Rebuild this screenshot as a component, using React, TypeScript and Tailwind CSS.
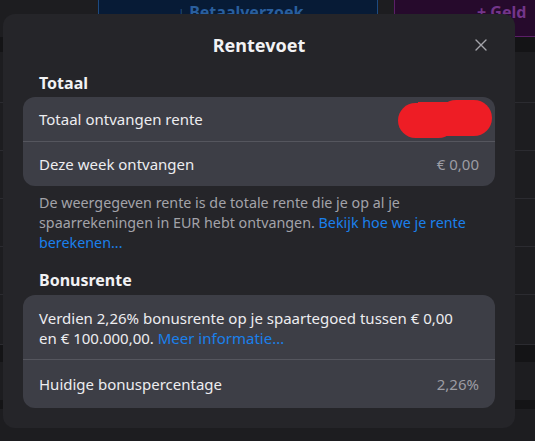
import React from "react";

function Row({ children, className = "" }: { children: React.ReactNode; className?: string }) {
  return <div className={`flex items-center justify-between px-4 ${className}`}>{children}</div>;
}

export default function App() {
  const font = { fontFamily: '"Noto Sans", "Open Sans", sans-serif' };
  return (
    <div className="relative w-[535px] h-[441px] overflow-hidden bg-[#1d1d20]" style={font}>
      {/* background page */}
      <div className="flex flex-col">
        <div className="flex h-[37px] items-end gap-4 pl-[98px]">
          <div className="flex h-[37px] w-[280px] items-start border border-t-0 border-[#1d4a80] bg-[#071b36] pl-[78px] pt-0 text-[16px] font-bold leading-[24px] text-[#2a5f9e]">
            ↓ Betaalverzoek
          </div>
          <div className="flex h-[37px] flex-1 items-start border border-t-0 border-r-0 border-[#5b1f68] bg-[#260a2c] pl-[82px] pt-0 text-[16px] font-bold leading-[24px] text-[#73358a]">
            + Geld
          </div>
        </div>
        <div className="h-[15px] bg-[#141416]" />
        <div className="h-[51px] border-b border-[#2b2b30]" />
        <div className="h-[48px] border-b border-[#2b2b30]" />
        <div className="h-[48px] border-b border-[#2b2b30]" />
        <div className="h-[48px] border-b border-[#2b2b30]" />
        <div className="h-[48px] border-b border-[#2b2b30]" />
        <div className="h-[50px] border-b border-[#2b2b30]" />
        <div className="h-[17px] bg-[#141416]" />
        <div className="h-[38px]" />
        <div className="h-[9px] bg-[#141416]" />
      </div>

      {/* modal */}
      <div className="absolute left-[3px] top-[14px] w-[512px] h-[414px] rounded-[12px] bg-[#252529] px-5 pb-5">
        <div className="relative flex h-[60px] items-center justify-center pt-[2px]">
          <span className="text-[18px] font-bold text-[#f2f2f4]">Rentevoet</span>
          <svg className="absolute right-[8px] top-[25px]" width="12" height="12" viewBox="0 0 12 12">
            <path d="M1 1 L11 11 M11 1 L1 11" stroke="#a4a4aa" strokeWidth="1.4" strokeLinecap="round" />
          </svg>
        </div>
        <div className="pl-4 text-[16px] font-bold leading-[24px] text-[#f2f2f4] -mt-[3px]">Totaal</div>
        <div className="mt-[2px] rounded-[12px] bg-[#3d3e46] text-[15px] text-[#ededf0]">
          <Row className="h-[44px]">
            <span>Totaal ontvangen rente</span>
            <span className="relative h-[38px] w-[94px] -mr-[13px]">
              <span className="absolute left-0 top-[3px] h-[35px] w-[58px] rounded-full bg-[#ee1d25]" />
              <span className="absolute left-[40px] top-0 h-[36px] w-[54px] rounded-full bg-[#ee1d25]" />
              <span className="absolute left-[20px] top-[2px] h-[34px] w-[46px] bg-[#ee1d25]" />
            </span>
          </Row>
          <div className="h-px bg-[#55565e]" />
          <Row className="h-[44px]">
            <span>Deze week ontvangen</span>
            <span className="text-[#9c9ca3]">€ 0,00</span>
          </Row>
        </div>
        <p className="mt-[7px] px-4 text-[14.3px] leading-[20px] text-[#a3a3a9]">
          De weergegeven rente is de totale rente die je op al je spaarrekeningen in EUR hebt ontvangen.{" "}
          <span className="text-[#1a80ec]">Bekijk hoe we je rente berekenen...</span>
        </p>
        <div className="mt-[15px] pl-4 text-[16px] font-bold leading-[24px] text-[#f2f2f4]">Bonusrente</div>
        <div className="mt-[3px] rounded-[12px] bg-[#3d3e46] text-[15px] text-[#ededf0]">
          <div className="px-4 pt-[13px] pb-[11px] leading-[20px]">
            Verdien 2,26% bonusrente op je spaartegoed tussen €{"\u00a0"}0,00 en{"\u00a0"}€{"\u00a0"}100.000,00.{" "}
            <span className="text-[#1a80ec]">Meer informatie...</span>
          </div>
          <div className="h-px bg-[#55565e]" />
          <Row className="h-[48px]">
            <span>Huidige bonuspercentage</span>
            <span className="text-[#9c9ca3]">2,26%</span>
          </Row>
        </div>
      </div>
    </div>
  );
}
